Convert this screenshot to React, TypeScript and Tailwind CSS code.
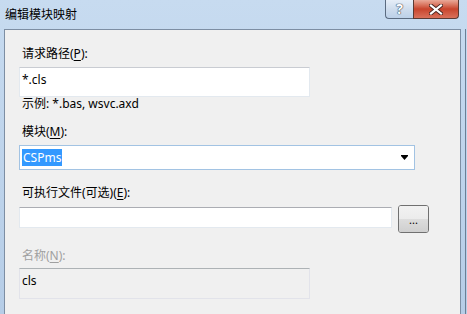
import React from "react";

const font = { fontFamily: '"Noto Sans", "Noto Sans CJK SC", sans-serif' };

function Key({ children }: { children: React.ReactNode }) {
  return <span className="underline underline-offset-[2px]">{children}</span>;
}

function CaptionButtons() {
  return (
    <div className="flex h-[19px]">
      <div className="flex w-[28px] items-center justify-center rounded-bl-[4px] border border-t-0 border-r-0 border-[#5b6b80] bg-gradient-to-b from-[#e6eef8] via-[#cfdded] to-[#bcd0e8]">
        <span
          className="text-[14px] font-bold leading-none text-white"
          style={{ textShadow: "0 0 1px #3a4a5e, 0 0 1px #3a4a5e, 0 0 1px #3a4a5e" }}
        >
          ?
        </span>
      </div>
      <div className="flex w-[46px] items-center justify-center rounded-br-[4px] border border-t-0 border-[#5b3a33] bg-gradient-to-b from-[#e9a998] via-[#c8442c] to-[#d9705a]">
        <svg width="14" height="11" viewBox="0 0 14 11">
          <path d="M2 1.5 L12 9.5 M12 1.5 L2 9.5" stroke="#4a2620" strokeWidth="4" strokeLinecap="square" />
          <path d="M2 1.5 L12 9.5 M12 1.5 L2 9.5" stroke="#ffffff" strokeWidth="2.2" strokeLinecap="square" />
        </svg>
      </div>
    </div>
  );
}

export default function App() {
  return (
    <div
      className="flex h-[314px] w-[467px] flex-col overflow-hidden bg-gradient-to-b from-[#c7dbf0] to-[#b6cde7] text-[12px] text-black"
      style={font}
    >
      <div className="flex h-[29px] shrink-0 items-start justify-between">
        <div className="pl-[5px] pt-[7px] leading-[16px] text-[#000]">编辑模块映射</div>
        <div className="flex items-start pr-[8px]">
          <CaptionButtons />
        </div>
      </div>

      <div className="flex min-h-0 flex-1">
        <div className="w-[4px] shrink-0" />
        <div className="flex flex-1 flex-col border-l border-t border-r border-[#7d8ea3] bg-[#f0f0f0] pl-[14px]">
          <div className="mt-[16px] pl-[3px] leading-[16px]">
            请求路径(<Key>P</Key>):
          </div>
          <div className="mt-[5px] h-[30px] w-[291px] border border-[#e3e9ef] border-t-[#c9ccd2] bg-white pl-[2px] pt-[4px] leading-[16px]">
            *.cls
          </div>
          <div className="pl-[3px] leading-[14px]">示例: *.bas, wsvc.axd</div>

          <div className="mt-[13px] pl-[3px] leading-[16px]">
            模块(<Key>M</Key>):
          </div>
          <div className="mt-[5px] flex h-[25px] w-[396px] items-center justify-between border border-[#a2c3e3] bg-white pl-[2px] pr-[5px]">
            <span className="bg-[#3399ff] px-[1px] leading-[17px] text-white">CSPms</span>
            <svg width="8" height="5" viewBox="0 0 8 5">
              <path d="M0 0 H7 V1 L3.5 5 L0 1 Z" fill="#000" />
            </svg>
          </div>

          <div className="mt-[15px] pl-[3px] leading-[16px]">
            可执行文件(可选)(<Key>E</Key>):
          </div>
          <div className="mt-[4px] flex items-start gap-[6px]">
            <div className="mt-[2px] h-[21px] w-[373px] border border-[#e3e9ef] border-t-[#abadb3] bg-white" />
            <div className="flex h-[28px] w-[31px] flex-col overflow-hidden rounded-[3px] border border-[#707070]">
              <div className="h-1/2 bg-gradient-to-b from-[#f2f2f2] to-[#ebebeb]" />
              <div className="relative h-1/2 bg-gradient-to-b from-[#dddddd] to-[#cfcfcf]">
                <span className="absolute inset-x-0 -top-[6px] text-center text-[11px] leading-[14px]">...</span>
              </div>
            </div>
          </div>

          <div className="mt-[15px] pl-[3px] leading-[16px] text-[#a0a0a0]">
            名称(<Key>N</Key>):
          </div>
          <div className="mt-[4px] h-[31px] w-[291px] border border-[#e2e3ea] border-t-[#adb2b5] bg-[#f0f0f0] pl-[2px] pt-[4px] leading-[16px]">
            cls
          </div>
        </div>
        <div className="flex w-[6px] shrink-0">
          <div className="w-[4px]" />
          <div className="w-[1px] bg-[#6b7f96]" />
        </div>
      </div>
    </div>
  );
}
